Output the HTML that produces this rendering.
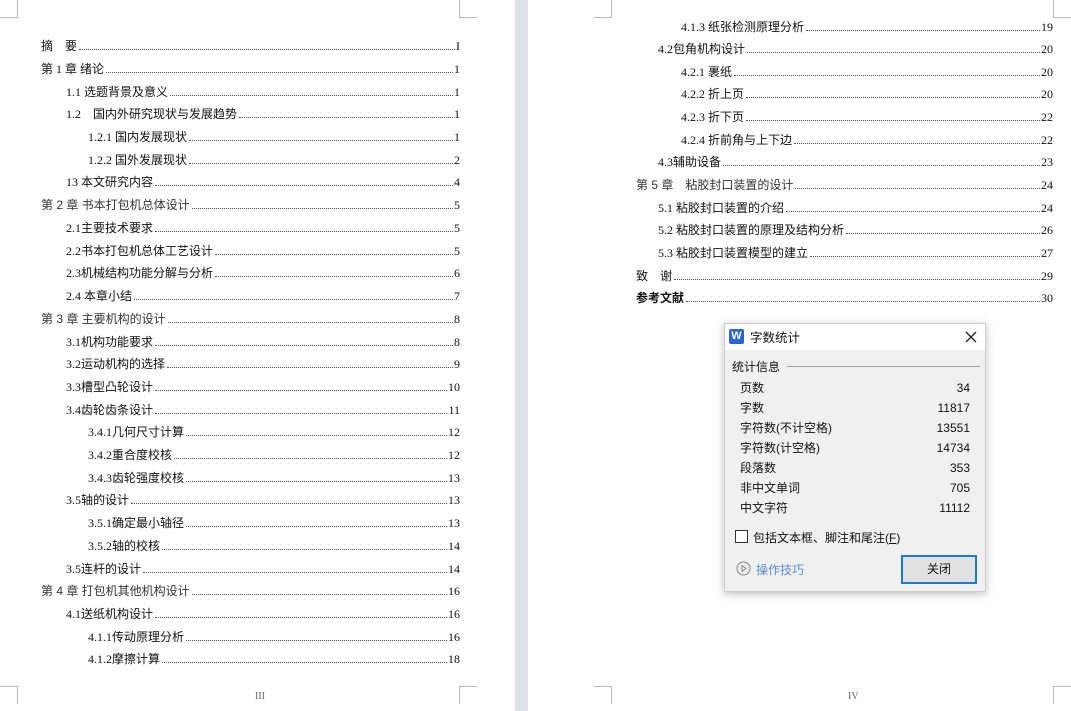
<!DOCTYPE html>
<html><head><meta charset="utf-8"><style>
*{margin:0;padding:0;box-sizing:border-box}
body{width:1071px;height:711px;background:#fff;position:relative;overflow:hidden;font-family:"Liberation Serif","Noto Sans CJK SC",serif;font-size:12px;color:#111}
.gap{position:absolute;left:515px;top:0;width:13px;height:711px;background:#dce2e5}
.m{position:absolute;border-color:#b8b8b8;border-style:solid;border-width:0}
.r{position:absolute;display:flex;align-items:flex-end;height:16px;line-height:16px;white-space:nowrap}
.r .d{flex:1;border-bottom:1px dotted #555;margin:0 1px 4px 2px}
.cn{font-family:"Liberation Sans","Noto Sans CJK SC",sans-serif;color:#333}
.pn{position:absolute;top:691px;font-size:10px;color:#666}
.dlg{position:absolute;left:724px;top:323px;width:262px;height:269px;background:#f0f0f0;border:1px solid #cfcfcf;box-shadow:0 2px 8px rgba(0,0,0,.25);font-family:"Liberation Sans","Noto Sans CJK SC",sans-serif;font-size:12px;color:#111}
.tb{height:26px;background:#fff;position:relative}
.st{position:absolute;left:15px;display:flex;justify-content:space-between;width:230px;line-height:14px}
</style></head><body>
<div class="gap"></div>
<div class="m" style="left:0;top:0;width:18px;height:18px;border-right-width:1px;border-bottom-width:1px"></div>
<div class="m" style="left:459px;top:0;width:18px;height:18px;border-left-width:1px;border-bottom-width:1px"></div>
<div class="m" style="left:0;top:686px;width:18px;height:18px;border-right-width:1px;border-top-width:1px"></div>
<div class="m" style="left:459px;top:686px;width:18px;height:18px;border-left-width:1px;border-top-width:1px"></div>
<div class="m" style="left:594px;top:0;width:18px;height:18px;border-right-width:1px;border-bottom-width:1px"></div>
<div class="m" style="left:1053px;top:0;width:18px;height:18px;border-left-width:1px;border-bottom-width:1px"></div>
<div class="m" style="left:594px;top:686px;width:18px;height:18px;border-right-width:1px;border-top-width:1px"></div>
<div class="m" style="left:1053px;top:686px;width:18px;height:18px;border-left-width:1px;border-top-width:1px"></div>
<div class="pn" style="left:255px">III</div>
<div class="pn" style="left:848px">IV</div>

<div class="r" style="left:41px;width:419px;top:38px"><span>摘　要</span><span class="d"></span><span>I</span></div>
<div class="r" style="left:41px;width:419px;top:61px"><span>第 1 章  绪论</span><span class="d"></span><span>1</span></div>
<div class="r" style="left:66px;width:394px;top:84px"><span>1.1  选题背景及意义</span><span class="d"></span><span>1</span></div>
<div class="r" style="left:66px;width:394px;top:106px"><span>1.2　国内外研究现状与发展趋势</span><span class="d"></span><span>1</span></div>
<div class="r" style="left:88px;width:372px;top:129px"><span>1.2.1 国内发展现状</span><span class="d"></span><span>1</span></div>
<div class="r" style="left:88px;width:372px;top:152px"><span>1.2.2 国外发展现状</span><span class="d"></span><span>2</span></div>
<div class="r" style="left:66px;width:394px;top:174px"><span>13  本文研究内容</span><span class="d"></span><span>4</span></div>
<div class="r" style="left:41px;width:419px;top:197px"><span class="cn">第 2 章  书本打包机总体设计</span><span class="d"></span><span>5</span></div>
<div class="r" style="left:66px;width:394px;top:220px"><span>2.1主要技术要求</span><span class="d"></span><span>5</span></div>
<div class="r" style="left:66px;width:394px;top:243px"><span>2.2书本打包机总体工艺设计</span><span class="d"></span><span>5</span></div>
<div class="r" style="left:66px;width:394px;top:265px"><span>2.3机械结构功能分解与分析</span><span class="d"></span><span>6</span></div>
<div class="r" style="left:66px;width:394px;top:288px"><span>2.4  本章小结</span><span class="d"></span><span>7</span></div>
<div class="r" style="left:41px;width:419px;top:311px"><span class="cn">第 3 章  主要机构的设计</span><span class="d"></span><span>8</span></div>
<div class="r" style="left:66px;width:394px;top:334px"><span>3.1机构功能要求</span><span class="d"></span><span>8</span></div>
<div class="r" style="left:66px;width:394px;top:356px"><span>3.2运动机构的选择</span><span class="d"></span><span>9</span></div>
<div class="r" style="left:66px;width:394px;top:379px"><span>3.3槽型凸轮设计</span><span class="d"></span><span>10</span></div>
<div class="r" style="left:66px;width:394px;top:402px"><span>3.4齿轮齿条设计</span><span class="d"></span><span>11</span></div>
<div class="r" style="left:88px;width:372px;top:424px"><span>3.4.1几何尺寸计算</span><span class="d"></span><span>12</span></div>
<div class="r" style="left:88px;width:372px;top:447px"><span>3.4.2重合度校核</span><span class="d"></span><span>12</span></div>
<div class="r" style="left:88px;width:372px;top:470px"><span>3.4.3齿轮强度校核</span><span class="d"></span><span>13</span></div>
<div class="r" style="left:66px;width:394px;top:492px"><span>3.5轴的设计</span><span class="d"></span><span>13</span></div>
<div class="r" style="left:88px;width:372px;top:515px"><span>3.5.1确定最小轴径</span><span class="d"></span><span>13</span></div>
<div class="r" style="left:88px;width:372px;top:538px"><span>3.5.2轴的校核</span><span class="d"></span><span>14</span></div>
<div class="r" style="left:66px;width:394px;top:561px"><span>3.5连杆的设计</span><span class="d"></span><span>14</span></div>
<div class="r" style="left:41px;width:419px;top:583px"><span class="cn">第 4 章  打包机其他机构设计</span><span class="d"></span><span>16</span></div>
<div class="r" style="left:66px;width:394px;top:606px"><span>4.1送纸机构设计</span><span class="d"></span><span>16</span></div>
<div class="r" style="left:88px;width:372px;top:629px"><span>4.1.1传动原理分析</span><span class="d"></span><span>16</span></div>
<div class="r" style="left:88px;width:372px;top:651px"><span>4.1.2摩擦计算</span><span class="d"></span><span>18</span></div>

<div class="r" style="left:681px;width:372px;top:19px"><span>4.1.3 纸张检测原理分析</span><span class="d"></span><span>19</span></div>
<div class="r" style="left:658px;width:395px;top:41px"><span>4.2包角机构设计</span><span class="d"></span><span>20</span></div>
<div class="r" style="left:681px;width:372px;top:64px"><span>4.2.1 裹纸</span><span class="d"></span><span>20</span></div>
<div class="r" style="left:681px;width:372px;top:86px"><span>4.2.2 折上页</span><span class="d"></span><span>20</span></div>
<div class="r" style="left:681px;width:372px;top:109px"><span>4.2.3 折下页</span><span class="d"></span><span>22</span></div>
<div class="r" style="left:681px;width:372px;top:132px"><span>4.2.4 折前角与上下边</span><span class="d"></span><span>22</span></div>
<div class="r" style="left:658px;width:395px;top:154px"><span>4.3辅助设备</span><span class="d"></span><span>23</span></div>
<div class="r" style="left:636px;width:417px;top:177px"><span class="cn">第 5 章　粘胶封口装置的设计</span><span class="d"></span><span>24</span></div>
<div class="r" style="left:658px;width:395px;top:200px"><span>5.1  粘胶封口装置的介绍</span><span class="d"></span><span>24</span></div>
<div class="r" style="left:658px;width:395px;top:222px"><span>5.2  粘胶封口装置的原理及结构分析</span><span class="d"></span><span>26</span></div>
<div class="r" style="left:658px;width:395px;top:245px"><span>5.3  粘胶封口装置模型的建立</span><span class="d"></span><span>27</span></div>
<div class="r" style="left:636px;width:417px;top:268px"><span>致　谢</span><span class="d"></span><span>29</span></div>
<div class="r" style="left:636px;width:417px;top:290px"><span style="font-weight:bold">参考文献</span><span class="d"></span><span>30</span></div>

<div class="dlg">
 <div class="tb">
  <div style="position:absolute;left:4px;top:5px;width:15px;height:15px;background:#2a63d8;border-radius:2px;color:#fff;font-weight:bold;font-size:11px;line-height:15px;text-align:center">W</div>
  <div style="position:absolute;left:25px;top:3px;font-size:12.5px">字数统计</div>
  <svg style="position:absolute;left:240px;top:7px" width="12" height="12"><path d="M1 1L11 11M11 1L1 11" stroke="#222" stroke-width="1.3"/></svg>
 </div>
 <div style="position:absolute;left:7px;top:34px">统计信息</div>
 <div style="position:absolute;left:62px;top:42px;width:193px;border-top:1px solid #a0a0a0"></div>
 <div class="st" style="top:57px"><span>页数</span><span>34</span></div>
 <div class="st" style="top:77px"><span>字数</span><span>11817</span></div>
 <div class="st" style="top:97px"><span>字符数(不计空格)</span><span>13551</span></div>
 <div class="st" style="top:117px"><span>字符数(计空格)</span><span>14734</span></div>
 <div class="st" style="top:137px"><span>段落数</span><span>353</span></div>
 <div class="st" style="top:157px"><span>非中文单词</span><span>705</span></div>
 <div class="st" style="top:177px"><span>中文字符</span><span>11112</span></div>
 <div style="position:absolute;left:10px;top:206px;width:13px;height:13px;border:1px solid #333;background:#fff"></div>
 <div style="position:absolute;left:28px;top:205px">包括文本框、脚注和尾注(<u>F</u>)</div>
 <svg style="position:absolute;left:11px;top:237px" width="15" height="15"><circle cx="7.5" cy="7.5" r="6.5" fill="none" stroke="#888"/><path d="M6 4.5L10 7.5L6 10.5Z" fill="none" stroke="#888"/></svg>
 <div style="position:absolute;left:31px;top:237px;color:#5b8fd8">操作技巧</div>
 <div style="position:absolute;left:176px;top:231px;width:76px;height:29px;border:2px solid #1a78d6;background:#e1e1e1;text-align:center;line-height:25px">关闭</div>
</div>
</body></html>
